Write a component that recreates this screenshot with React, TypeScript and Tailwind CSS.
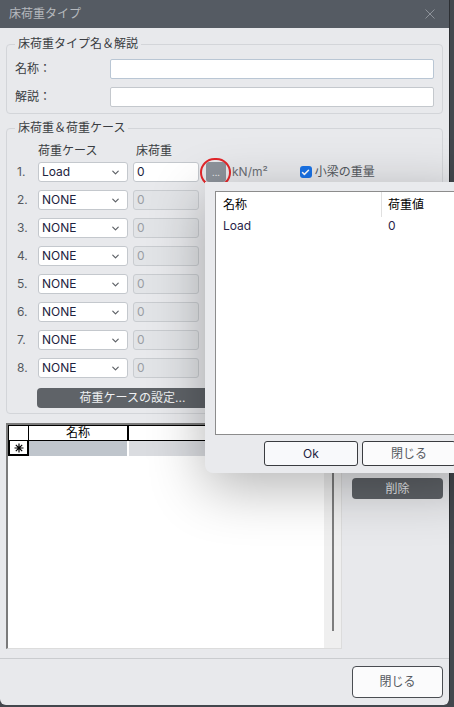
import { ChevronDown, Check } from "lucide-react";

interface LoadCaseRow {
  id: number;
  name: string;
  value: string;
  enabled: boolean;
}

const loadCases: LoadCaseRow[] = [
  { id: 1, name: "Load", value: "0", enabled: true },
  { id: 2, name: "NONE", value: "0", enabled: false },
  { id: 3, name: "NONE", value: "0", enabled: false },
  { id: 4, name: "NONE", value: "0", enabled: false },
  { id: 5, name: "NONE", value: "0", enabled: false },
  { id: 6, name: "NONE", value: "0", enabled: false },
  { id: 7, name: "NONE", value: "0", enabled: false },
  { id: 8, name: "NONE", value: "0", enabled: false },
];

const caseValues = [{ name: "Load", value: "0" }];

function CaseSelect({ value }: { value: string }) {
  return (
    <div className="w-[90px] h-[20px] flex items-center justify-between pl-[3px] pr-[6px] bg-white border border-[#c4c8cd] rounded-[3px]">
      <span className="text-[12px] text-[#1d2340]">{value}</span>
      <ChevronDown size={11} strokeWidth={2.6} className="text-[#5d6166]" />
    </div>
  );
}

function LoadRow({ row }: { row: LoadCaseRow }) {
  return (
    <div className="flex items-center h-[20px]">
      <span className="w-[21px] text-[12px] text-[#55595f]">{row.id}.</span>
      <CaseSelect value={row.name} />
      <div
        className={`ml-[5px] w-[66px] h-[20px] flex items-center pl-[3px] border rounded-[3px] text-[12px] ${
          row.enabled
            ? "bg-white border-[#c4c8cd] text-[#1d2340]"
            : "bg-[#e2e4e7] border-[#c9ccd0] text-[#9a9ea4]"
        }`}
      >
        {row.value}
      </div>
      {row.enabled && (
        <>
          <button className="ml-[7px] w-[20px] h-[20px] flex items-center justify-center bg-[#8d939b] rounded-[3px] text-[9px] leading-none text-[#e6e8ea]">
            ...
          </button>
          <span className="ml-[6px] text-[12px] text-[#6b6f75]">kN/m²</span>
          <label className="ml-[32px] flex items-center gap-[3px] text-[12px] text-[#55595f]">
            <span className="w-[12px] h-[12px] flex items-center justify-center bg-[#1a73e8] rounded-[3px]">
              <Check size={9} strokeWidth={4} className="text-white" />
            </span>
            小梁の重量
          </label>
        </>
      )}
    </div>
  );
}

export default function App() {
  return (
    <div className="relative w-[454px] h-[707px] overflow-hidden bg-[#43474d] font-[Inter,'Noto_Sans_CJK_JP',sans-serif] text-[12px] text-[#3a3d42]">
      <div className="w-[450px] h-[705px] flex flex-col bg-[#e8e9ec] rounded-b-[6px] border-r border-[#2c2f33]">
        {/* title bar */}
        <div className="h-[28px] shrink-0 flex items-center justify-between pl-[9px] pr-[14px] bg-[#555b63]">
          <span className="text-[12px] text-[#b5b9be]">床荷重タイプ</span>
          <svg width="10" height="10" viewBox="0 0 10 10" className="text-[#8d9299]">
            <path d="M0.5 0.5 L9.5 9.5 M9.5 0.5 L0.5 9.5" stroke="currentColor" strokeWidth="1" />
          </svg>
        </div>

        <div className="flex-1 flex flex-col px-[6px] pt-[8px] pb-[9px]">
          {/* name & description */}
          <fieldset className="border border-[#d3d5d9] rounded-[4px] pl-[8px] pr-[8px] pb-[6px]">
            <legend className="px-[3px] leading-[16px] text-[12px] text-[#3a3d42]">
              床荷重タイプ名＆解説
            </legend>
            <div className="flex flex-col gap-[8px] pt-[7px]">
              <div className="flex items-center">
                <span className="w-[95px] text-[12px]">名称：</span>
                <div className="flex-1 h-[20px] bg-white border border-[#b9c6d4] rounded-[2px]" />
              </div>
              <div className="flex items-center">
                <span className="w-[95px] text-[12px]">解説：</span>
                <div className="flex-1 h-[20px] bg-white border border-[#c4c8cd] rounded-[2px]" />
              </div>
            </div>
          </fieldset>

          {/* load cases */}
          <fieldset className="mt-[6px] border border-[#d3d5d9] rounded-[4px] pl-[10px] pr-[8px] pb-[5px]">
            <legend className="-ml-[2px] px-[3px] leading-[16px] text-[12px] text-[#3a3d42]">
              床荷重＆荷重ケース
            </legend>
            <div className="mt-[7px] h-[16px] flex items-center text-[12px] text-[#3a3d42]">
              <span className="ml-[21px] w-[98px]">荷重ケース</span>
              <span>床荷重</span>
            </div>
            <div className="mt-[3px] flex flex-col gap-[8px]">
              {loadCases.map((row) => (
                <LoadRow key={row.id} row={row} />
              ))}
            </div>
            <button className="mt-[10px] ml-[20px] w-[191px] h-[20px] flex items-center justify-center bg-[#5f6368] rounded-[4px] text-[12px] text-[#eef0f2]">
              荷重ケースの設定...
            </button>
          </fieldset>

          {/* type list */}
          <div className="mt-[9px] flex-1 flex gap-[10px]">
            <div className="w-[336px] flex border-t-2 border-l-2 border-[#7b7b7b] border-b border-r border-b-[#dcdcdc] border-r-[#dcdcdc]">
              <div className="flex-1 bg-white flex flex-col">
                <div className="flex h-[16px]">
                  <div className="w-[21px] bg-white border border-black" />
                  <div className="w-[100px] bg-white border-y border-r-2 border-black flex items-center justify-center text-[12px] text-black">
                    名称
                  </div>
                  <div className="flex-1 bg-white border-y border-black" />
                </div>
                <div className="flex h-[15px]">
                  <div className="w-[21px] flex items-center justify-center bg-white border-2 border-t-0 border-black">
                    <svg width="10" height="10" viewBox="0 0 10 10">
                      <path d="M5 0.5 V9.5 M0.5 5 H9.5 M1.8 1.8 L8.2 8.2 M8.2 1.8 L1.8 8.2" stroke="#000" strokeWidth="1.2" />
                    </svg>
                  </div>
                  <div className="w-[100px] bg-[#bfc5cc] border-r-2 border-white" />
                  <div className="flex-1 bg-[#dadce0]" />
                </div>
              </div>
              <div className="w-[17px] bg-[#efefef] flex justify-center pt-[17px] pb-[17px]">
                <div className="w-[2px] bg-[#7d7d7d]" />
              </div>
            </div>
            <div className="flex flex-col">
              <button className="mt-[55px] w-[91px] h-[21px] flex items-center justify-center bg-[#5f6368] rounded-[4px] text-[12px] text-[#e8eaec]">
                削除
              </button>
            </div>
          </div>
        </div>

        {/* footer */}
        <div className="h-[47px] shrink-0 border-t border-[#cacccf] flex items-start justify-end pt-[7px] pr-[6px]">
          <button className="w-[91px] h-[32px] bg-[#fbfbfc] border border-[#4a4d52] rounded-[4px] text-[12px] text-[#55595f]">
            閉じる
          </button>
        </div>
      </div>

      {/* ... button highlight */}
      <div className="absolute left-[200px] top-[158px] w-[31px] h-[29px] rounded-full border-2 border-[#e3262a]" />

      {/* load value picker */}
      <div className="absolute left-[205px] top-[182px] w-[270px] h-[291px] bg-[#e9eaed] rounded-bl-[8px] shadow-[0_14px_56px_rgba(0,0,0,0.3)] flex flex-col pl-[10px] pt-[9px]">
        <div className="w-[245px] h-[244px] bg-white border border-[#8c8c8c]">
          <div className="flex h-[25px] items-center text-[12px] text-black">
            <div className="w-[166px] h-full flex items-center pl-[7px] border-r border-[#e0e0e0]">名称</div>
            <div className="pl-[6px]">荷重値</div>
          </div>
          {caseValues.map((c) => (
            <div key={c.name} className="flex h-[18px] items-center text-[12px] text-[#2a1f4a]">
              <div className="w-[167px] pl-[7px]">{c.name}</div>
              <div className="pl-[5px]">{c.value}</div>
            </div>
          ))}
        </div>
        <div className="mt-[6px] flex gap-[4px] pl-[49px]">
          <button className="w-[94px] h-[25px] bg-[#f8f9fb] border border-[#3a3c40] rounded-[3px] text-[12px] text-[#1d2340]">
            Ok
          </button>
          <button className="w-[94px] h-[25px] bg-[#fbfbfc] border border-[#3a3c40] rounded-[3px] text-[12px] text-[#55595f]">
            閉じる
          </button>
        </div>
      </div>
    </div>
  );
}
